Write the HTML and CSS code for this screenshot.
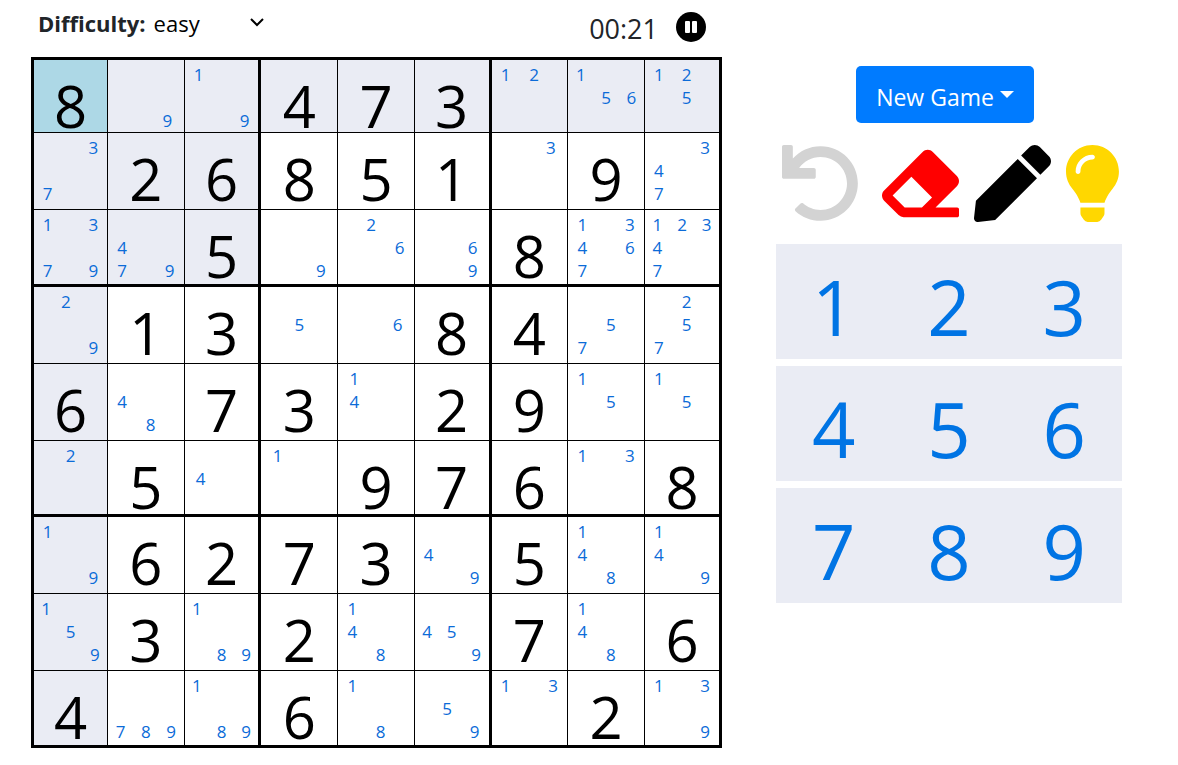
FILE: index.html
```html
<!DOCTYPE html>
<html lang="en">
<head>
<meta charset="utf-8">
<title>Sudoku</title>
<link rel="stylesheet" href="styles.css">
</head>
<body>
<main class="game">
  <section class="play">
    <header class="status">
      <label class="status-label" for="difficulty">Difficulty:</label>
      <div class="picker">
        <select class="picker-select" id="difficulty">
          <option>easy</option>
          <option>medium</option>
          <option>hard</option>
        </select>
        <svg class="picker-arrow" viewBox="0 0 14 9" aria-hidden="true"><path d="M1 1l6 6 6-6" fill="none" stroke="currentColor" stroke-width="2"/></svg>
      </div>
      <span class="timer">00:21</span>
      <button class="pause" type="button" aria-label="Pause">
        <svg class="pause-icon" viewBox="0 0 30 30" aria-hidden="true"><circle cx="15" cy="15" r="15"/><rect x="9" y="9" width="5" height="12" rx="1" fill="#fff"/><rect x="16" y="9" width="5" height="12" rx="1" fill="#fff"/></svg>
      </button>
    </header>
    <table class="board" aria-label="Sudoku board">
      <colgroup><col class="edge"><col span="7"><col class="edge"></colgroup>
      <tbody id="board"></tbody>
    </table>
  </section>

  <aside class="controls">
    <button class="new-game" type="button">New Game<span class="caret"></span></button>
    <div class="tools">
      <button class="tool undo" type="button" aria-label="Undo"><svg class="tool-icon" viewBox="0 0 512 512" aria-hidden="true"><path d="M212.333 224.333H12c-6.627 0-12-5.373-12-12V12C0 5.373 5.373 0 12 0h48c6.627 0 12 5.373 12 12v78.112C117.773 39.279 184.26 7.47 258.175 8.007c136.906.994 246.448 111.623 246.157 248.532C504.041 393.258 393.12 504 256.333 504c-64.089 0-122.496-24.313-166.51-64.215-5.099-4.622-5.334-12.554-.467-17.42l33.967-33.967c4.474-4.474 11.662-4.717 16.401-.525C170.76 415.336 211.58 432 256.333 432c97.268 0 176-78.716 176-176 0-97.267-78.716-176-176-176-58.496 0-110.28 28.476-142.274 72.333h98.274c6.627 0 12 5.373 12 12v48c0 6.627-5.373 12-12 12z"/></svg></button>
      <button class="tool erase" type="button" aria-label="Erase"><svg class="tool-icon" viewBox="0 0 512 512" aria-hidden="true"><path d="M497.941 273.941c18.745-18.745 18.745-49.137 0-67.882l-160-160c-18.745-18.745-49.136-18.746-67.883 0l-256 256c-18.745 18.745-18.745 49.137 0 67.882l96 96A48.004 48.004 0 0 0 144 480h356c6.627 0 12-5.373 12-12v-40c0-6.627-5.373-12-12-12H355.883l142.058-142.059zm-302.627-62.627l137.373 137.373L265.373 416H150.628l-80-80 124.686-124.686z"/></svg></button>
      <button class="tool notes" type="button" aria-label="Notes"><svg class="tool-icon" viewBox="0 0 512 512" aria-hidden="true"><path d="M290.74 93.24l128.02 128.02-277.99 277.99-114.14 12.6C11.35 513.54-1.56 500.62.14 485.34l12.7-114.22 277.9-277.88zm207.2-19.06l-60.11-60.11c-18.75-18.75-49.16-18.75-67.91 0l-56.55 56.55 128.02 128.02 56.55-56.55c18.75-18.76 18.75-49.16 0-67.91z"/></svg></button>
      <button class="tool hint" type="button" aria-label="Hint"><svg class="tool-icon" viewBox="0 0 352 512" aria-hidden="true"><path d="M96.06 454.35c.01 6.29 1.87 12.45 5.36 17.69l17.09 25.69a31.99 31.99 0 0 0 26.64 14.28h61.71a31.99 31.99 0 0 0 26.64-14.28l17.09-25.69a31.989 31.989 0 0 0 5.36-17.69l.04-38.35H96.01l.05 38.35zM0 176c0 44.37 16.45 84.85 43.56 115.78 16.52 18.85 42.36 58.23 52.21 91.45.04.26.07.52.11.78h160.24c.04-.26.07-.51.11-.78 9.85-33.22 35.69-72.6 52.21-91.45C335.55 260.85 352 220.37 352 176 352 78.61 272.91-.3 175.45 0 73.44.31 0 82.97 0 176zm176-80c-44.11 0-80 35.89-80 80 0 8.84-7.16 16-16 16s-16-7.16-16-16c0-61.76 50.24-112 112-112 8.84 0 16 7.16 16 16s-7.16 16-16 16z"/></svg></button>
    </div>
    <div class="keypad">
      <div class="keys"><button class="key" type="button">1</button><button class="key" type="button">2</button><button class="key" type="button">3</button></div>
      <div class="keys"><button class="key" type="button">4</button><button class="key" type="button">5</button><button class="key" type="button">6</button></div>
      <div class="keys"><button class="key" type="button">7</button><button class="key" type="button">8</button><button class="key" type="button">9</button></div>
    </div>
  </aside>
</main>
<script src="board.js"></script>
</body>
</html>
```
FILE: styles.css
```css
* {
  box-sizing: border-box;
}

body {
  margin: 0;
  background: #fff;
  color: #212529;
  font-family: "Open Sans", "Noto Sans", sans-serif;
}

button,
select {
  font-family: inherit;
  margin: 0;
  padding: 0;
  border: 0;
  background: none;
}

.game {
  display: grid;
  grid-template-columns: 691fr 346fr;
  column-gap: 54px;
  padding: 0 56px 16px 31px;
}

/* Status bar */
.status {
  display: flex;
  align-items: center;
  height: 57px;
  padding: 0 16px 12px 7px;
}

.status-label {
  font-size: 22px;
  font-weight: 700;
  line-height: 32px;
}

.picker {
  display: grid;
  align-items: center;
  width: 114px;
  margin-left: 8px;
}

.picker-select {
  grid-area: 1 / 1;
  appearance: none;
  width: 100%;
  font-size: 22px;
  line-height: 32px;
  color: #000;
}

.picker-arrow {
  grid-area: 1 / 1;
  justify-self: end;
  width: 14px;
  height: 9px;
  margin: 0 4px 0 0;
  color: #000;
  pointer-events: none;
}

.timer {
  margin-left: auto;
  padding-top: 12px;
  font-size: 27px;
  line-height: 36px;
}

.pause {
  width: 30px;
  height: 30px;
  margin: 8px 0 0 18px;
}

.pause-icon {
  display: block;
}

/* Board */
.board {
  width: 100%;
  table-layout: fixed;
  border: 3px solid #000;
  border-collapse: separate;
  border-spacing: 0;
  color: #000;
}

.edge {
  width: 74px;
}

.cell {
  height: 77px;
  padding: 0;
  border: 0 solid #000;
  border-width: 0 1px 1px 0;
  vertical-align: top;
}

.cell:nth-child(3n) {
  border-right-width: 3px;
}

.row:nth-child(3n) .cell {
  border-bottom-width: 3px;
}

.cell:last-child {
  border-right-width: 0;
}

.row:first-child .cell {
  height: 73px;
}

.row:nth-child(6) .cell {
  height: 76px;
}

.row:last-child .cell {
  height: 74px;
  border-bottom-width: 0;
}

.peer {
  background: #eaecf4;
}

.selected {
  background: #add8e6;
}

.digit {
  padding-top: 20px;
  font-size: 58px;
  line-height: 52px;
  text-align: center;
}

/* Pencil marks: columns holding marks are wider than empty ones */
.marks {
  display: flex;
  padding-top: 3px;
  color: #0b6bd8;
  font-size: 17px;
  line-height: 23px;
  text-align: center;
}

.lane {
  flex: 2 1 0;
}

.lane-filled {
  flex-grow: 3;
}

.mark {
  height: 23px;
}

/* Controls */
.controls {
  display: flex;
  flex-direction: column;
  padding-top: 66px;
}

.new-game {
  display: flex;
  align-items: center;
  align-self: center;
  height: 57px;
  margin-left: -8px;
  padding: 4px 20px 0;
  border-radius: 5px;
  background: #007bff;
  color: #fff;
  font-size: 23px;
}

.caret {
  margin: 0 0 4px 6px;
  border: 7px solid transparent;
  border-top-color: #fff;
  border-bottom: 0;
}

.tools {
  display: flex;
  gap: 15px;
  margin-top: 22px;
  padding-left: 6px;
}

.tool-icon {
  display: block;
  height: 77px;
  fill: currentColor;
}

.undo {
  margin-right: 8px;
  color: #d3d3d3;
}

.erase {
  color: #f00;
}

.notes {
  color: #000;
}

.hint {
  color: #ffd700;
}

.keypad {
  display: grid;
  gap: 7px;
  margin-top: 22px;
}

.keys {
  display: grid;
  grid-template-columns: repeat(3, 1fr);
  background: #eaecf4;
}

.key {
  padding: 13px 0 2px;
  color: #0074e4;
  font-size: 76px;
  line-height: 100px;
}
```
FILE: board.js
```js
// One entry per cell: "=n" is a placed digit, otherwise the list of pencil marks.
const rows = [
  "=8 9 19 =4 =7 =3 12 156 125",
  "37 =2 =6 =8 =5 =1 3 =9 347",
  "1379 479 =5 9 26 69 =8 13467 12347",
  "29 =1 =3 5 6 =8 =4 57 257",
  "=6 48 =7 =3 14 =2 =9 15 15",
  "2 =5 4 1 =9 =7 =6 13 =8",
  "19 =6 =2 =7 =3 49 =5 148 149",
  "159 =3 189 =2 148 459 =7 148 =6",
  "=4 789 189 =6 18 59 13 =2 139"
].map(row => row.split(" "));

const selected = { row: 0, col: 0 };

function element(tag, className, text = "") {
  const node = document.createElement(tag);
  node.className = className;
  node.textContent = text;
  return node;
}

function isPeer(row, col) {
  const sameBox = Math.floor(row / 3) === Math.floor(selected.row / 3) &&
    Math.floor(col / 3) === Math.floor(selected.col / 3);
  return row === selected.row || col === selected.col || sameBox;
}

function marksOf(value) {
  const marks = element("div", "marks");
  for (let lane = 1; lane <= 3; lane++) {
    const digits = [lane, lane + 3, lane + 6].map(n => value.includes(n) ? String(n) : "");
    const column = element("div", digits.join("") ? "lane lane-filled" : "lane");
    digits.forEach(n => column.append(element("div", "mark", n)));
    marks.append(column);
  }
  return marks;
}

const board = document.getElementById("board");
rows.forEach((cells, row) => {
  const tr = element("tr", "row");
  cells.forEach((value, col) => {
    const td = element("td", "cell");
    if (row === selected.row && col === selected.col) td.classList.add("selected");
    else if (isPeer(row, col)) td.classList.add("peer");
    td.append(value[0] === "=" ? element("div", "digit", value[1]) : marksOf(value));
    tr.append(td);
  });
  board.append(tr);
});
```
